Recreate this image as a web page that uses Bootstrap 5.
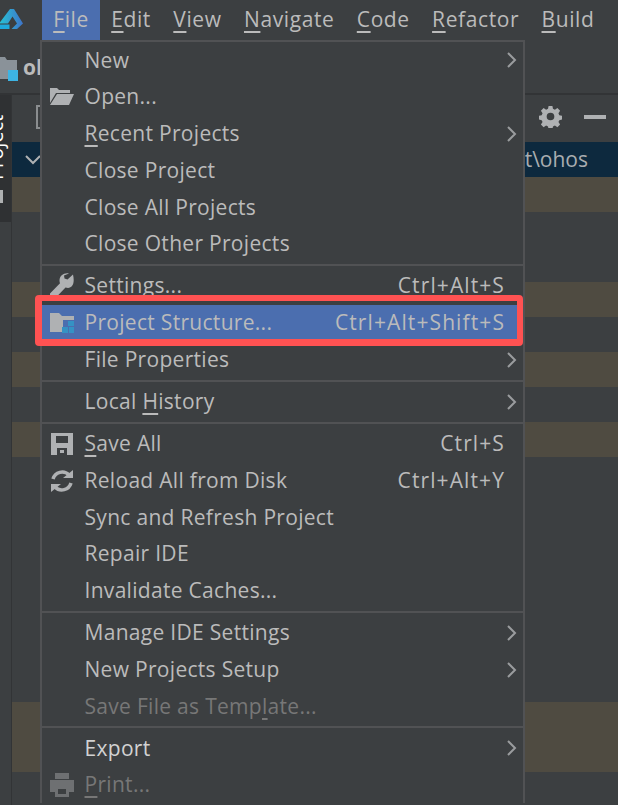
<!DOCTYPE html>
<html lang="en">
<head>
  <meta charset="UTF-8" />
  <title>File menu</title>
  <meta name="viewport" content="width=device-width, initial-scale=1">
  <link href="https://cdn.jsdelivr.net/npm/bootstrap@5.3.0/dist/css/bootstrap.min.css" rel="stylesheet">
  <style>
    html, body { height: 100%; }
    body {
      background: #3c3f41;
      color: #bbb;
      font-family: "Open Sans", "Noto Sans", sans-serif;
      font-size: 21px;
      overflow: hidden;
      position: relative;
    }
    u { text-underline-offset: 4px; text-decoration-thickness: 2px; }

    /* menu bar */
    .top-bar { height: 40px; }
    .logo-cell { width: 42px; }
    .top-item { padding: 0 11.2px; line-height: 38px; white-space: nowrap; letter-spacing: .6px; }
    .top-item.on { background: #4b6eaf; }

    /* project bar and tool window */
    .path-bar { height: 55px; border-bottom: 2px solid #323436; padding-top: 14px; }
    .path-name { font-weight: 700; margin-left: 3px; line-height: 26px; }
    .side-strip { width: 12px; border-right: 1px solid #323436; flex: none; }
    .side-tab { width: 11px; height: 127px; background: #2f3133; overflow: hidden; }
    .side-tab span {
      display: block;
      writing-mode: vertical-rl;
      transform: rotate(180deg);
      color: #fff;
      line-height: 20px;
      margin-left: -14px;
      height: 85px;
      font-size: 20px;
    }
    .side-icon { width: 3px; height: 13px; background: #aeb0b1; margin-top: -32px; position: relative; }
    .tool-bar { height: 47px; padding: 0 12px 4px 24px; gap: 22px; }
    .tree-row { height: 35px; }
    .tree-row.sel { background: #0d293e; padding: 0 30px 0 13px; color: #a9adb0; }
    .tree-row.warm { background: #4f4b41; }

    /* file menu */
    .file-menu {
      position: absolute;
      left: 40px;
      top: 40px;
      width: 485px;
      background: #3c3f41;
      border: 2px solid #515254;
      border-bottom: 0;
      border-radius: 0;
      padding: 0;
      display: block;
      font-size: 21px;
      color: #bbb;
      z-index: 5;
    }
    .file-menu .dropdown-item {
      position: relative;
      display: flex;
      align-items: center;
      height: 36.75px;
      padding: 0 18px 0 42.500px;
      color: #bbb;
      background: none;
      letter-spacing: .3px;
    }
    .file-menu .dropdown-item.off { color: #777; }
    .file-menu .dropdown-item.bright { color: #d2d2d2; }
    .file-menu .dropdown-item.active { background: #4b6eaf; color: #bbb; width: auto; margin-right: 6px; padding-right: 12px; }
    .menu-ico { position: absolute; left: 7px; top: 50%; transform: translateY(-50%); width: 26px; height: 26px; }
    .key { margin-left: auto; letter-spacing: 1.1px; }
    .arrow { position: absolute; right: 6px; top: 50%; transform: translateY(-50%); width: 11px; height: 18px; }
    .menu-sep { height: 5.3px; display: flex; align-items: center; }
    .menu-sep::before { content: ""; display: block; width: 100%; height: 2px; background: #515254; }
    .red-frame {
      position: absolute;
      left: -7px;
      right: -6px;
      top: -10px;
      bottom: -5px;
      border: solid #ff5252;
      border-width: 6px 6px 7px 7px;
      border-radius: 4px;
      pointer-events: none;
    }
  </style>
</head>
<body>

  <!-- Menu bar -->
  <div class="top-bar d-flex">
    <div class="logo-cell flex-shrink-0">
      <svg width="24" height="40" viewBox="0 0 24 40" class="d-block">
        <defs>
          <linearGradient id="logoFill" x1="0" x2="1" y1="0" y2="0">
            <stop offset="0" stop-color="#27c4d6"/>
            <stop offset="1" stop-color="#3f74c9"/>
          </linearGradient>
        </defs>
        <path d="M10 9 L14 9 L23 23.500 L17 29 L11.500 29 L17 23.500 L12.500 16.500 L8 23.500 L-1 23.500 Z" fill="url(#logoFill)"/>
        <path d="M-1 24.500 L9.500 24.500 L9.500 29 L-1 29 Z" fill="#1fa9dd"/>
      </svg>
    </div>
    <div class="top-item on"><u>F</u>ile</div>
    <div class="top-item"><u>E</u>dit</div>
    <div class="top-item"><u>V</u>iew</div>
    <div class="top-item"><u>N</u>avigate</div>
    <div class="top-item"><u>C</u>ode</div>
    <div class="top-item"><u>R</u>efactor</div>
    <div class="top-item"><u>B</u>uild</div>
    <div class="top-item">F</div>
  </div>

  <!-- Project path bar -->
  <div class="path-bar d-flex align-items-start">
    <svg width="20" height="28" viewBox="0 0 20 28" class="flex-shrink-0">
      <path d="M-2 3 L5 3 L7 6 L17 6 L17 25 L-2 25 Z" fill="#8a9299"/>
      <rect x="8" y="16" width="10" height="11" fill="#3db4e4"/>
    </svg>
    <span class="path-name">ol</span>
  </div>

  <div class="d-flex">
    <!-- Left tool strip -->
    <div class="side-strip">
      <div class="side-tab"><span>Project</span></div>
      <div class="side-icon"></div>
    </div>

    <!-- Project tool window -->
    <div class="flex-grow-1">
      <div class="tool-bar d-flex align-items-center">
        <svg width="10" height="24" viewBox="0 0 10 24" class="me-auto"><rect x="1" y="1" width="20" height="22" fill="none" stroke="#8a8d8f" stroke-width="2"/></svg>
        <svg width="23" height="23" viewBox="0 0 24 24">
          <path fill="#afb1b3" fill-rule="evenodd" d="M10 1h4l.6 3 2 .9 2.600-1.700 2.800 2.800-1.700 2.600.9 2 3 .6v4l-3 .6-.9 2 1.700 2.600-2.800 2.800-2.600-1.700-2 .9-.6 3h-4l-.6-3-2-.9-2.600 1.700-2.800-2.800 1.700-2.600-.9-2-3-.6v-4l3-.6.9-2-1.700-2.600 2.800-2.800 2.600 1.700 2-.9zM12 8a4 4 0 1 0 0 8 4 4 0 0 0 0-8z"/>
        </svg>
        <svg width="22" height="4" viewBox="0 0 22 4"><rect width="22" height="4" fill="#afb1b3"/></svg>
      </div>
      <div class="tree-row sel d-flex align-items-center justify-content-between">
        <svg width="16" height="10" viewBox="0 0 16 10"><path d="M1 1 L8 8 L15 1" fill="none" stroke="#afb1b3" stroke-width="2"/></svg>
        <span>t\ohos</span>
      </div>
      <div class="tree-row warm"></div>
      <div class="tree-row"></div>
      <div class="tree-row"></div>
      <div class="tree-row warm"></div>
      <div class="tree-row"></div>
      <div class="tree-row warm"></div>
      <div class="tree-row"></div>
      <div class="tree-row warm"></div>
      <div class="tree-row"></div>
      <div class="tree-row"></div>
      <div class="tree-row"></div>
      <div class="tree-row"></div>
      <div class="tree-row"></div>
      <div class="tree-row"></div>
      <div class="tree-row"></div>
      <div class="tree-row warm"></div>
      <div class="tree-row warm"></div>
      <div class="tree-row"></div>
    </div>
  </div>

  <!-- File menu -->
  <div class="file-menu dropdown-menu show">
    <div class="dropdown-item">New
      <svg class="arrow" viewBox="0 0 11 18"><path d="M2 2 L9 9 L2 16" fill="none" stroke="#9a9c9e" stroke-width="2"/></svg>
    </div>
    <div class="dropdown-item">
      <svg class="menu-ico" viewBox="0 0 26 26"><path fill="#afb1b3" d="M1 4h7l2 2h11v3H7L1 19zM8 10h17l-5 11H1z"/></svg>
      Open...
    </div>
    <div class="dropdown-item"><span><u>R</u>ecent Projects</span>
      <svg class="arrow" viewBox="0 0 11 18"><path d="M2 2 L9 9 L2 16" fill="none" stroke="#9a9c9e" stroke-width="2"/></svg>
    </div>
    <div class="dropdown-item">Close Project</div>
    <div class="dropdown-item">Close All Projects</div>
    <div class="dropdown-item">Close Other Projects</div>
    <div class="menu-sep"></div>
    <div class="dropdown-item">
      <svg class="menu-ico" viewBox="0 0 26 26"><path fill="#afb1b3" d="M24 1.500 l-5.500 5 -3-1 -.5-3 5-2 C15 -.5 10.500 2.500 10.500 7.500 c0 1 .2 2 .5 2.700 L1 20.500 v5 h5 L16.500 14.500 c1 .3 1.800 .4 2.500 .4 4.500 0 7-4.500 5-13.400z"/></svg>
      Settings...<span class="key">Ctrl+Alt+S</span>
    </div>
    <div class="dropdown-item active">
      <svg class="menu-ico" viewBox="0 0 26 26">
        <path fill="#afb1b3" d="M1 3h9l3 3h12v4H14v12H1z"/>
        <rect x="19" y="11" width="6" height="5" fill="#3592c4"/>
        <rect x="13" y="17" width="6" height="6" fill="#3592c4"/>
        <rect x="20" y="17" width="5" height="6" fill="#3592c4"/>
      </svg>
      Project Structure...<span class="key">Ctrl+Alt+Shift+S</span>
      <span class="red-frame"></span>
    </div>
    <div class="dropdown-item">File Properties
      <svg class="arrow" viewBox="0 0 11 18"><path d="M2 2 L9 9 L2 16" fill="none" stroke="#9a9c9e" stroke-width="2"/></svg>
    </div>
    <div class="menu-sep"></div>
    <div class="dropdown-item"><span>Local <u>H</u>istory</span>
      <svg class="arrow" viewBox="0 0 11 18"><path d="M2 2 L9 9 L2 16" fill="none" stroke="#9a9c9e" stroke-width="2"/></svg>
    </div>
    <div class="menu-sep"></div>
    <div class="dropdown-item">
      <svg class="menu-ico" viewBox="0 0 26 26"><path fill="#afb1b3" fill-rule="evenodd" d="M2 2h22v22H2zM7 5v7h12V5zM8 17v7h10v-7zM11 19h4v3h-4z"/></svg>
      <span><u>S</u>ave All</span><span class="key">Ctrl+S</span>
    </div>
    <div class="dropdown-item">
      <svg class="menu-ico" viewBox="0 0 26 26">
        <path fill="none" stroke="#afb1b3" stroke-width="3.500" d="M4 11 A9.500 9.500 0 0 1 20 7 M22 15 A9.500 9.500 0 0 1 6 19"/>
        <path fill="#afb1b3" d="M14 10h10V2zM12 16H2v8z"/>
      </svg>
      Reload All from Disk<span class="key">Ctrl+Alt+Y</span>
    </div>
    <div class="dropdown-item">Sync and Refresh Project</div>
    <div class="dropdown-item">Repair IDE</div>
    <div class="dropdown-item">Invalidate Caches...</div>
    <div class="menu-sep"></div>
    <div class="dropdown-item">Manage IDE Settings
      <svg class="arrow" viewBox="0 0 11 18"><path d="M2 2 L9 9 L2 16" fill="none" stroke="#9a9c9e" stroke-width="2"/></svg>
    </div>
    <div class="dropdown-item">New Projects Setup
      <svg class="arrow" viewBox="0 0 11 18"><path d="M2 2 L9 9 L2 16" fill="none" stroke="#9a9c9e" stroke-width="2"/></svg>
    </div>
    <div class="dropdown-item off"><span>Save File as Temp<u>l</u>ate...</span></div>
    <div class="menu-sep"></div>
    <div class="dropdown-item bright">Export
      <svg class="arrow" viewBox="0 0 11 18"><path d="M2 2 L9 9 L2 16" fill="none" stroke="#9a9c9e" stroke-width="2"/></svg>
    </div>
    <div class="dropdown-item off">
      <svg class="menu-ico" viewBox="0 0 26 26"><path fill="#6e7072" fill-rule="evenodd" d="M6 1h14v6H6zM1 8h24v12h-5v5H6v-5H1zM9 17v5h8v-5z"/></svg>
      <span><u>P</u>rint...</span>
    </div>
  </div>

  <script src="https://cdn.jsdelivr.net/npm/bootstrap@5.3.0/dist/js/bootstrap.bundle.min.js"></script>
</body>
</html>
